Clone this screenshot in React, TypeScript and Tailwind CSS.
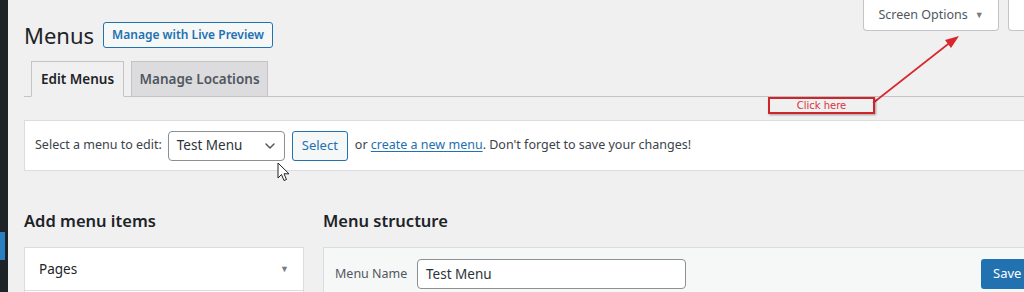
import { ChevronDown } from 'lucide-react';

const font = { fontFamily: '"Noto Sans", "Open Sans", sans-serif' };

const ClickHereNote = () => (
  <div className="pointer-events-none absolute left-0 top-0 h-[292px] w-[1024px]">
    <svg className="absolute left-0 top-0" width="1024" height="292" viewBox="0 0 1024 292">
      <line x1="873" y1="103" x2="952" y2="41" stroke="#d9262c" strokeWidth="1.6" />
      <polygon points="959,36 945,40 951,48" fill="#d9262c" />
    </svg>
    <div className="absolute left-[768px] top-[97px] flex h-[17px] w-[107px] items-center justify-center border-2 border-[#d0242b] shadow-[1px_1px_2px_rgba(0,0,0,0.35)]">
      <span className="leading-none text-[#d9343a]" style={{ fontFamily: '"DejaVu Sans", sans-serif', fontSize: '10px' }}>
        Click here
      </span>
    </div>
  </div>
);

const Cursor = () => (
  <svg className="absolute left-[277px] top-[162px]" width="14" height="21" viewBox="0 0 14 21">
    <path d="M1 1 L1 16 L4.5 12.5 L7 18.5 L9.5 17.5 L7 11.8 L12 11.8 Z" fill="#fff" stroke="#222" strokeWidth="1" strokeLinejoin="round" />
  </svg>
);

export default function App() {
  return (
    <div className="relative flex h-[292px] w-[1024px] overflow-hidden bg-[#f0f0f1] text-[#3c434a]" style={font}>
      {/* admin menu edge */}
      <div className="relative w-[8px] shrink-0 bg-[#1d2327]">
        <div className="absolute left-0 top-[232px] h-[28px] w-[5px] bg-[#2a7fc0]" />
      </div>

      <div className="w-[1095px] shrink-0 pl-[16px] pr-[20px]">
        <div className="flex items-start">
          <div className="flex items-center gap-[9px] pt-[22px]">
            <h1 className="text-[22px] font-normal leading-[25px] text-[#1d2327]">Menus</h1>
            <button className="h-[26px] rounded-[3px] border border-[#2271b1] bg-[#f6f7f7] px-[8px] text-[12px] font-semibold text-[#2271b1]">
              Manage with Live Preview
            </button>
          </div>
          <div className="ml-auto mr-[11px] flex gap-[9px]">
            <div className="flex h-[31px] w-[136px] items-center justify-center gap-[7px] rounded-b-[4px] border border-t-0 border-[#c3c4c7] bg-white text-[12.5px] text-[#50575e]">
              Screen Options <span className="text-[9px] text-[#787c82]">▼</span>
            </div>
            <div className="flex h-[31px] w-[64px] items-center justify-center rounded-b-[4px] border border-t-0 border-[#c3c4c7] bg-white text-[13px] text-[#50575e]">
              Help
            </div>
          </div>
        </div>

        <nav className="mt-[13px] flex gap-[7px] border-b border-[#c3c4c7] pl-[7px]">
          <div className="mb-[-1px] flex h-[36px] w-[93px] items-center justify-center border border-[#c3c4c7] border-b-[#f0f0f1] bg-[#f0f0f1] text-[13.5px] font-semibold text-[#1d2327]">
            Edit Menus
          </div>
          <div className="flex h-[35px] w-[137px] items-center justify-center border border-b-0 border-[#c3c4c7] bg-[#dcdcde] text-[13.5px] font-semibold text-[#50575e]">
            Manage Locations
          </div>
        </nav>

        <div className="mt-[23px] flex h-[51px] items-center border border-[#dcdcde] bg-white pl-[10px] text-[12.5px]">
          <span>Select a menu to edit:</span>
          <div className="ml-[6px] flex h-[30px] w-[117px] items-center justify-between rounded-[4px] border border-[#8c8f94] bg-white pl-[8px] pr-[6px] text-[13.5px] text-[#2c3338]">
            Test Menu
            <ChevronDown size={16} strokeWidth={2.2} className="text-[#50575e]" />
          </div>
          <button className="ml-[7px] h-[30px] w-[56px] rounded-[3px] border border-[#2271b1] bg-[#f6f7f7] text-[13px] text-[#2271b1]">
            Select
          </button>
          <span className="ml-[7px]">
            or <span className="text-[#2271b1] underline underline-offset-2">create a new menu</span>. Don't forget to save your changes!
          </span>
        </div>

        <div className="mt-[38px] flex gap-[19px]">
          <div className="w-[280px] shrink-0">
            <h2 className="text-[16.5px] font-semibold leading-[24px] text-[#1d2327]">Add menu items</h2>
            <div className="mt-[14px] border border-[#dcdcde] bg-white">
              <div className="flex h-[43px] items-center justify-between border-b border-[#dcdcde] px-[14px] text-[13.5px] text-[#1d2327]">
                Pages
                <span className="text-[9px] text-[#787c82]">▼</span>
              </div>
              <div className="h-[20px]" />
            </div>
          </div>

          <div className="flex-1">
            <h2 className="text-[16.5px] font-semibold leading-[24px] text-[#1d2327]">Menu structure</h2>
            <div className="mt-[14px] border border-[#dcdcde] bg-[#f6f7f7]">
              <div className="flex h-[52px] items-center pl-[11px] pr-[10px]">
                <span className="w-[82px] text-[12.5px] text-[#50575e]">Menu Name</span>
                <div className="flex h-[30px] w-[269px] items-center rounded-[4px] border border-[#8c8f94] bg-white px-[8px] text-[13.5px] text-[#2c3338]">
                  Test Menu
                </div>
                <button className="ml-auto h-[30px] rounded-[3px] bg-[#2271b1] px-[12px] text-[13px] text-white">
                  Save Menu
                </button>
              </div>
              <div className="h-[20px]" />
            </div>
          </div>
        </div>
      </div>

      <Cursor />
      <ClickHereNote />
    </div>
  );
}
